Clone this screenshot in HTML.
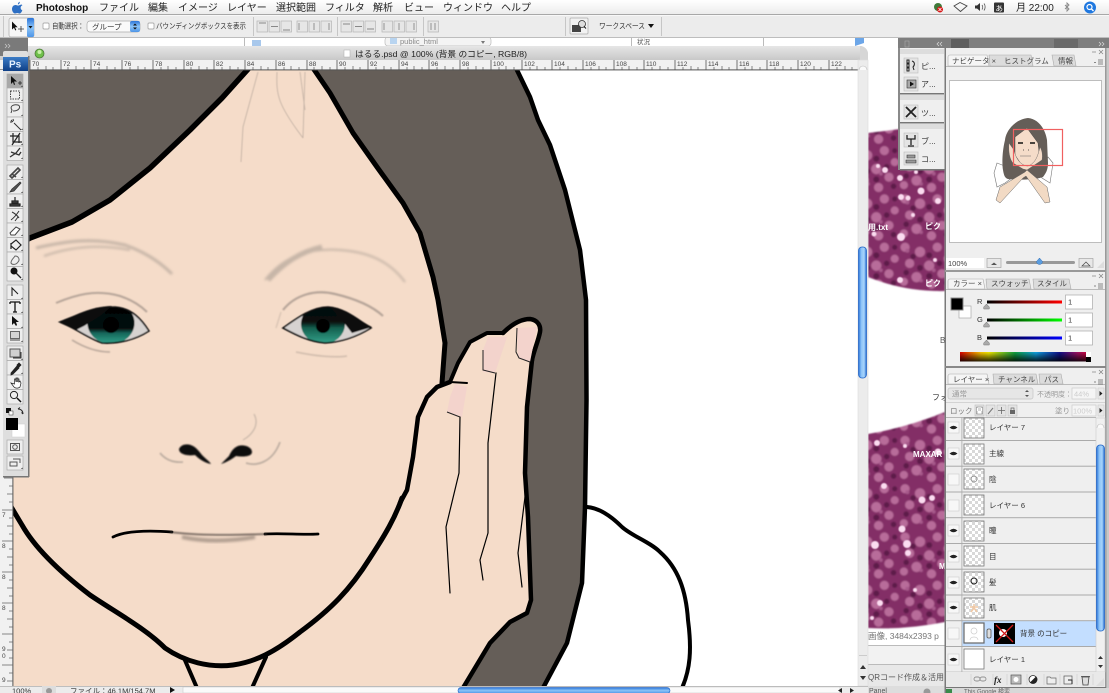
<!DOCTYPE html>
<html><head><meta charset="utf-8"><title>Photoshop</title>
<style>
html,body{margin:0;padding:0;background:#fff;width:1109px;height:693px;overflow:hidden}
svg{display:block}
#root{filter:blur(.3px)}
text{font-family:"Liberation Sans","Noto Sans CJK JP",sans-serif;fill:#333}
.m{font-size:10px;fill:#222}
.o{font-size:7.5px;fill:#333}
.t{font-size:7.5px;fill:#444}
.r{font-size:6.5px;fill:#444}
.l{font-size:7.5px;fill:#333}
.w{font-size:8px;fill:#fff;font-weight:bold}
</style></head><body>
<svg id="root" width="1109" height="693" viewBox="0 0 1109 693" xmlns="http://www.w3.org/2000/svg">
<defs>
<linearGradient id="menu" x1="0" y1="0" x2="0" y2="1"><stop offset="0" stop-color="#fff"/><stop offset="1" stop-color="#ececec"/></linearGradient>
<linearGradient id="title" x1="0" y1="0" x2="0" y2="1"><stop offset="0" stop-color="#e6e6e6"/><stop offset="1" stop-color="#c8c8c8"/></linearGradient>
<linearGradient id="blue" x1="0" y1="0" x2="1" y2="0"><stop offset="0" stop-color="#2a74d8"/><stop offset=".35" stop-color="#8cc4f8"/><stop offset=".7" stop-color="#a8d4fb"/><stop offset="1" stop-color="#1f6ad0"/></linearGradient>
<linearGradient id="blueh" x1="0" y1="0" x2="0" y2="1"><stop offset="0" stop-color="#2a74d8"/><stop offset=".5" stop-color="#8cc4f8"/><stop offset="1" stop-color="#4d94e6"/></linearGradient>
<linearGradient id="ps" x1="0" y1="0" x2="0" y2="1"><stop offset="0" stop-color="#3c7cc6"/><stop offset="1" stop-color="#0f3f86"/></linearGradient>
<linearGradient id="sr" x1="0" y1="0" x2="1" y2="0"><stop offset="0" stop-color="#000"/><stop offset="1" stop-color="#f00"/></linearGradient>
<linearGradient id="sg" x1="0" y1="0" x2="1" y2="0"><stop offset="0" stop-color="#000"/><stop offset="1" stop-color="#0f0"/></linearGradient>
<linearGradient id="sb" x1="0" y1="0" x2="1" y2="0"><stop offset="0" stop-color="#000"/><stop offset="1" stop-color="#00f"/></linearGradient>
<linearGradient id="hue" x1="0" y1="0" x2="1" y2="0"><stop offset="0" stop-color="#d00"/><stop offset=".16" stop-color="#f5c400"/><stop offset=".22" stop-color="#f0e800"/><stop offset=".42" stop-color="#10a040"/><stop offset=".58" stop-color="#10a0e0"/><stop offset=".76" stop-color="#10108a"/><stop offset=".9" stop-color="#a01060"/><stop offset="1" stop-color="#e00030"/></linearGradient>
<linearGradient id="dark" x1="0" y1="0" x2="0" y2="1"><stop offset="0" stop-color="#000" stop-opacity="0"/><stop offset="1" stop-color="#000" stop-opacity=".85"/></linearGradient>
<linearGradient id="irisL" x1="0" y1="0" x2="0" y2="1"><stop offset="0" stop-color="#040404"/><stop offset=".62" stop-color="#060a0a"/><stop offset=".74" stop-color="#15665a"/><stop offset="1" stop-color="#35a58c"/></linearGradient>
<linearGradient id="irisR" x1="0" y1="0" x2="0" y2="1"><stop offset="0" stop-color="#040404"/><stop offset=".45" stop-color="#081210"/><stop offset=".6" stop-color="#14604f"/><stop offset="1" stop-color="#36a48c"/></linearGradient>
<pattern id="chk" width="6" height="6" patternUnits="userSpaceOnUse"><rect width="6" height="6" fill="#fff"/><rect width="3" height="3" fill="#d8d8d8"/><rect x="3" y="3" width="3" height="3" fill="#d8d8d8"/></pattern>
<pattern id="gl" width="46" height="42" patternUnits="userSpaceOnUse" patternTransform="scale(1.15)">
<rect width="46" height="42" fill="#832f66"/>
<g fill="#b86c9a"><circle cx="5" cy="5" r="4"/><circle cx="18" cy="9" r="4.500"/><circle cx="33" cy="5" r="4"/><circle cx="42" cy="15" r="3.500"/><circle cx="9" cy="19" r="4"/><circle cx="26" cy="21" r="4.500"/><circle cx="37" cy="28" r="4"/><circle cx="15" cy="31" r="4.500"/><circle cx="4" cy="35" r="3.500"/><circle cx="28" cy="37" r="4"/></g>
<g fill="#5d1a4a"><circle cx="12" cy="13" r="2.400"/><circle cx="26" cy="12" r="2.600"/><circle cx="35" cy="19" r="2.400"/><circle cx="18" cy="23" r="2.600"/><circle cx="6" cy="27" r="2.400"/><circle cx="26" cy="30" r="2.600"/><circle cx="41" cy="36" r="2.400"/><circle cx="42" cy="5" r="2.200"/></g>
<g fill="#a85a8c"><circle cx="30" cy="25" r="1.600"/><circle cx="7" cy="8" r="1.700"/><circle cx="19" cy="34" r="1.500"/></g>
</pattern>
<filter id="b1" x="-20%" y="-50%" width="140%" height="200%"><feGaussianBlur stdDeviation=".7"/></filter>
<filter id="b2" x="-20%" y="-100%" width="140%" height="300%"><feGaussianBlur stdDeviation="1.300"/></filter>
<filter id="b3" x="-10%" y="-10%" width="120%" height="120%"><feGaussianBlur stdDeviation=".4"/></filter>
<filter id="bg"><feGaussianBlur stdDeviation=".7"/></filter>
</defs>

<!-- desktop base -->
<rect width="1109" height="693" fill="#fff"/>

<!-- glitter behind -->
<rect x="868" y="40" width="77" height="653" fill="#fff"/>
<g filter="url(#bg)">
<path d="M868 133L900 129H945V291Q905 292 868 277Z" fill="url(#gl)"/>
<path d="M868 434Q905 428 945 412V622Q905 630 868 628Z" fill="url(#gl)"/>
</g>
<g fill="#fbdcf0" filter="url(#b3)">
<circle cx="885" cy="170" r="3"/><circle cx="900" cy="178" r="3"/><circle cx="921" cy="191" r="3.500"/><circle cx="901" cy="197" r="3"/><circle cx="908" cy="198" r="2.500"/><circle cx="938" cy="201" r="3"/><circle cx="901" cy="237" r="4"/><circle cx="874" cy="234" r="2.500"/><circle cx="900" cy="280" r="3"/><circle cx="878" cy="166" r="2"/><circle cx="916" cy="172" r="2"/><circle cx="913" cy="215" r="2"/><circle cx="935" cy="260" r="2"/>
<circle cx="877" cy="443" r="3"/><circle cx="905" cy="446" r="2"/><circle cx="938" cy="452" r="3.500"/><circle cx="884" cy="486" r="3"/><circle cx="922" cy="500" r="3.500"/><circle cx="932" cy="498" r="3"/><circle cx="902" cy="529" r="3.500"/><circle cx="875" cy="545" r="4"/><circle cx="907" cy="544" r="4"/><circle cx="908" cy="553" r="3"/><circle cx="880" cy="603" r="3"/><circle cx="915" cy="590" r="2"/><circle cx="872" cy="618" r="2"/>
</g>
<text class="w" x="868" y="230">用.txt</text>
<text class="w" x="925" y="229">ピク</text>
<text class="w" x="925" y="286">ピク</text>
<text x="940" y="343" font-size="8" style="fill:#555">B</text>
<text x="932" y="400" font-size="8" style="fill:#333">フォ</text>
<text class="w" x="913" y="457">MAXAR</text>
<text class="w" x="939" y="569">M</text>
<text x="868" y="639" font-size="8.500" style="fill:#777">画像, 3484x2393 p</text>
<rect x="868" y="645" width="77" height="1" fill="#bbb"/>
<rect x="868" y="646" width="77" height="18" fill="#f2f2f2"/>
<rect x="868" y="664" width="77" height="1" fill="#bbb"/>
<rect x="868" y="665" width="77" height="21" fill="#e8e8e8"/>
<text x="868" y="680" font-size="8" style="fill:#555">QRコード作成＆活用の</text>
<rect x="868" y="686" width="77" height="7" fill="#ddd"/>
<text x="869" y="693" font-size="7" style="fill:#555">Panel</text>
<circle cx="927" cy="692" r="3.500" fill="#999"/>

<!-- strip behind doc window -->
<rect x="28" y="38" width="830" height="9" fill="#fff"/>
<rect x="244" y="38" width="1" height="9" fill="#bbb"/>
<rect x="252" y="40" width="9" height="7" fill="#a8c8ec"/>
<rect x="385" y="37" width="106" height="9" rx="3" fill="#f4f4f4" stroke="#bbb" stroke-width=".7"/>
<rect x="390" y="38" width="7" height="6" fill="#b8d4f0"/>
<text x="400" y="44" font-size="7.500" style="fill:#888">public_html</text>
<path d="M481 41l2 3 2-3z" fill="#777"/>
<rect x="631" y="38" width="1" height="9" fill="#bbb"/>
<text x="637" y="44" font-size="6.500" style="fill:#555">状況</text>
<rect x="763" y="38" width="1" height="9" fill="#bbb"/>
<path d="M855 38h9v5l-9 3z" fill="#6ca6e8"/>

<!-- doc window -->
<path d="M13 60V46H860a8 8 0 0 1 8 8V693H13Z" fill="#ddd"/>
<rect x="0" y="46" width="862" height="14" fill="url(#title)"/>
<path d="M860 46a8 8 0 0 1 8 8v6h-8z" fill="#d6d6d6"/>
<circle cx="39.500" cy="53.500" r="4.500" fill="#6fc04a" stroke="#4f7a3c" stroke-width=".8"/>
<circle cx="39.500" cy="52" r="2" fill="#c8f0a8"/>
<rect x="344" y="50" width="6" height="7" fill="#fff" stroke="#aaa" stroke-width=".5"/>
<text x="355" y="57" font-size="8.700" style="fill:#222">はるる.psd @ 100% (背景 のコピー, RGB/8)</text>

<!-- canvas art -->
<svg x="13" y="70" width="845" height="616" viewBox="13 70 845 616">
<rect x="13" y="70" width="845" height="616" fill="#f5dcc9"/>
<!-- left hair -->
<path d="M0 70H248L222 98 190 130 150 168 110 200 72 222 30 238 0 254Z" fill="#655e58"/>
<!-- right hair -->
<path d="M313 70L330 93 353 133 377 167 403 203 420 233 433 277 438 300 445 343 442 383 500 450 500 620 430 686H543L567 643 582 583 585 507 586.500 400 586 300 580 250 565 190 550 145 538 120 530 97 517 70Z" fill="#655e58"/>
<!-- white -->
<path d="M517 70L530 97 538 120 550 145 565 190 580 250 586 300 586.500 400 585 507 582 583 567 643 543 686H858V70Z" fill="#fff"/>
<!-- outlines -->
<g fill="none" stroke="#000" stroke-linecap="round" stroke-linejoin="round">
<path d="M249 68L222 98 190 130 150 168 110 200 72 222 30 238 10 250" stroke-width="5.500"/>
<path d="M313 68L330 93 353 133 377 167 403 203 420 233 433 277 438 300 445 343 442 383" stroke-width="5"/>
<path d="M516 68L530 97 538 120 550 145 565 190 580 250 586 300 586.500 400 585 507 582 583 567 643 543 688" stroke-width="4.500"/>
<path d="M587 507C600 508 612 517 622 527 632 536 650 542 660 552 678 568 686 590 688 620 692 650 690 670 682 688" stroke-width="4"/>
<path d="M400 503L407 490 413 457 418 417 427 397 437 387 450 382 458 363 470 342 487 333 503 333C510 326 520 319 530 319 538 320 541 326 540 332 538 342 534 350 532 360L527 407 525 473 528 517 531 600 527 613 510 622 490 643 463 688H380Z" fill="#f5dcc9" stroke="none"/>
<path d="M400 503L407 490 413 457 418 417 427 397 437 387 450 382" stroke-width="4.500"/>
<path d="M450 382L467 383" stroke-width="2"/>
<path d="M450 382L458 363 470 342 487 333 503 333" stroke-width="4"/>
<path d="M503 333C510 326 520 319 530 319 538 320 541 326 540 332 538 342 534 350 532 360" stroke-width="4.500"/>
<path d="M532 360L527 407 525 473 528 517 531 600 527 613 510 622 490 643 463 688" stroke-width="4.500"/>
<path d="M10 505L22 525C35 548 60 572 90 595 115 612 145 628 165 648 185 662 210 668 233 665 255 662 275 652 300 632 330 610 350 590 370 558 385 535 395 518 402 498" stroke-width="5"/>
<path d="M184 658L197 688M266 657L252 688" stroke-width="4"/>
<path d="M113 537C125 531 145 530 172 532" stroke-width="2.800"/>
<path d="M265 534C285 533 300 535 318 534" stroke-width="2.800"/>
<g stroke-width="1.200"><path d="M460 417L459 473 446 527 450 593"/><path d="M496 373L488 443 488 533 480 560 483 580"/><path d="M525 497L518 553 522 587"/></g>
</g>
<!-- nails -->
<g fill="#f3d3cc"><path d="M455 384L467 387 462 417 447 412 450 397Z"/><path d="M488 337L507 337 495 373 483 372 483 350Z"/><path d="M517 328L537 327 530 362 518 358Z"/></g>
<g fill="none" stroke="#222" stroke-width="1"><path d="M447 412L460 417M483 350L483 370 495 373M517 328L516 352 519 358 530 362"/></g>
<!-- mouth center -->
<path d="M170 532C200 536 235 535 267 534" fill="none" stroke="#3a332e" stroke-width="2" opacity=".6" filter="url(#b1)"/>
<path d="M182 537Q215 544 255 537" fill="none" stroke="#6d6058" stroke-width="4" opacity=".5" filter="url(#b2)"/>
<!-- hair strands -->
<g fill="none" stroke="#a79a90" stroke-width=".9" opacity=".6" filter="url(#b3)">
<path d="M258 72L243 127 241 162"/><path d="M277 72C276 95 278 105 303 138"/><path d="M305 72L303 138"/><path d="M300 72L305 110"/>
</g>
<!-- brows -->
<g fill="none" stroke="#a89c92" opacity=".6" filter="url(#b2)">
<path d="M36 248C70 240 95 238 125 245 145 252 160 262 172 274" stroke-width="3"/><path d="M44 256C75 245 105 245 130 250" stroke-width="2"/>
<path d="M265 280C285 255 310 248 340 250 370 252 390 262 405 282" stroke-width="2"/><path d="M268 280C285 262 300 252 322 247" stroke-width="5"/>
</g>
<!-- lids -->
<g fill="none" filter="url(#b1)" stroke="#9b8d84" opacity=".7">
<path d="M56 303C75 295 95 289 120 296 135 301 143 308 147 312" stroke-width="2"/>
<path d="M72 340C85 348 98 352 110 352" stroke-width="1.500"/>
<path d="M283 310C295 295 315 289 335 294 352 298 370 304 383 316" stroke-width="2.200"/>
<path d="M296 352C315 356 335 358 347 356" stroke-width="1.500" opacity=".6"/>
<path d="M276 328L281 312" stroke-width="1" opacity=".6"/>
</g>
<!-- eyes -->
<clipPath id="le"><path d="M60 322C75 316 95 307 115 307 132 308 142 320 149 331 135 340 118 344 102 343 88 338 75 328 60 322Z"/></clipPath>
<clipPath id="re"><path d="M283 328C297 318 312 307 328 307 345 308 358 320 371 328 358 336 342 342 325 343 310 342 296 335 283 328Z"/></clipPath>
<g filter="url(#b3)">
<path d="M60 322C75 316 95 307 115 307 132 308 142 320 149 331 135 340 118 344 102 343 88 338 75 328 60 322Z" fill="#d6d2d0"/>
<g clip-path="url(#le)"><ellipse cx="111" cy="323" rx="23.500" ry="21" fill="url(#irisL)"/><circle cx="111" cy="325" r="8" fill="#000"/></g>
<path d="M60 322C75 316 95 307 115 307 132 308 142 320 149 331 135 340 118 344 102 343 88 338 75 328 60 322Z" fill="none" stroke="#111" stroke-width="1.600"/>
<path d="M60 323C72 316 92 306 112 306L100 316 84 326 76 330Z" fill="#080808"/>
<path d="M283 328C297 318 312 307 328 307 345 308 358 320 371 328 358 336 342 342 325 343 310 342 296 335 283 328Z" fill="#d6d2d0"/>
<g clip-path="url(#re)"><ellipse cx="323" cy="324" rx="22" ry="20" fill="url(#irisR)"/><circle cx="323" cy="326" r="7" fill="#000"/></g>
<path d="M283 328C297 318 312 307 328 307 345 308 358 320 371 328 358 336 342 342 325 343 310 342 296 335 283 328Z" fill="none" stroke="#111" stroke-width="1.600"/>
<path d="M330 307C345 308 358 320 372 327L352 333 342 320Z" fill="#080808"/>
</g>
<!-- nose -->
<g filter="url(#b1)">
<path d="M179 449C181 444 188 443 193 446 198 449 200 453 203 456 206 459 210 462 211 464 205 463 199 459 195 455 189 456 179 455 179 449Z" fill="#111"/>
<path d="M252 452C252 447 244 444 238 446 233 448 231 452 229 456 226 459 223 462 221 464 227 462 232 459 236 456 242 457 252 457 252 452Z" fill="#111"/>
</g>
<g fill="none" stroke="#a89c92" filter="url(#b1)" opacity=".7">
<path d="M160 453C165 459 172 463 183 462" stroke-width="1.800"/>
<path d="M246 463C255 466 272 464 280 442" stroke-width="1.800"/>
<path d="M243 440C252 435 260 425 254 414" stroke-width="1"/>
</g>
</svg>

<!-- rulers -->
<rect x="0" y="60" width="858" height="10" fill="#f1f1f1"/>
<rect x="0" y="69.400" width="858" height="1" fill="#555"/>
<path d="M30 60v10M61 60v10M91 60v10M122 60v10M153 60v10M184 60v10M214 60v10M245 60v10M276 60v10M307 60v10M337 60v10M368 60v10M399 60v10M429 60v10M460 60v10M491 60v10M522 60v10M552 60v10M583 60v10M614 60v10M644 60v10M675 60v10M706 60v10M737 60v10M767 60v10M798 60v10M829 60v10" stroke="#555" stroke-width=".8"/>
<path d="M38 67v3M46 66v4M53 67v3M68 67v3M76 66v4M84 67v3M99 67v3M107 66v4M115 67v3M130 67v3M138 66v4M145 67v3M161 67v3M168 66v4M176 67v3M191 67v3M199 66v4M207 67v3M222 67v3M230 66v4M238 67v3M253 67v3M261 66v4M268 67v3M284 67v3M291 66v4M299 67v3M314 67v3M322 66v4M330 67v3M345 67v3M353 66v4M360 67v3M376 67v3M384 66v4M391 67v3M407 67v3M414 66v4M422 67v3M437 67v3M445 66v4M453 67v3M468 67v3M476 66v4M483 67v3M499 67v3M506 66v4M514 67v3M530 67v3M537 66v4M545 67v3M560 67v3M568 66v4M576 67v3M591 67v3M599 66v4M606 67v3M622 67v3M629 66v4M637 67v3M652 67v3M660 66v4M668 67v3M683 67v3M691 66v4M698 67v3M714 67v3M722 66v4M729 67v3M745 67v3M752 66v4M760 67v3M775 67v3M783 66v4M791 67v3M806 67v3M814 66v4M821 67v3M837 67v3M845 66v4M852 67v3" stroke="#555" stroke-width=".7"/>
<text class="r" x="32" y="66">70</text><text class="r" x="63" y="66">72</text><text class="r" x="93" y="66">74</text><text class="r" x="124" y="66">76</text><text class="r" x="155" y="66">78</text><text class="r" x="186" y="66">80</text><text class="r" x="216" y="66">82</text><text class="r" x="247" y="66">84</text><text class="r" x="278" y="66">86</text><text class="r" x="309" y="66">88</text><text class="r" x="339" y="66">90</text><text class="r" x="370" y="66">92</text><text class="r" x="401" y="66">94</text><text class="r" x="431" y="66">96</text><text class="r" x="462" y="66">98</text><text class="r" x="493" y="66">100</text><text class="r" x="524" y="66">102</text><text class="r" x="554" y="66">104</text><text class="r" x="585" y="66">106</text><text class="r" x="616" y="66">108</text><text class="r" x="646" y="66">110</text><text class="r" x="677" y="66">112</text><text class="r" x="708" y="66">114</text><text class="r" x="739" y="66">116</text><text class="r" x="769" y="66">118</text><text class="r" x="800" y="66">120</text><text class="r" x="831" y="66">122</text>
<rect x="0" y="70" width="13" height="616" fill="#f1f1f1"/>
<rect x="12.400" y="70" width="1" height="616" fill="#555"/>
<path d="M4 478h9M9 486h4M7 494h6M9 502h4M2 510h11M9 518h4M7 526h6M9 534h4M2 541h11M9 549h4M7 557h6M9 565h4M2 572h11M9 580h4M7 588h6M9 596h4M2 603h11M9 611h4M7 619h6M9 627h4M2 634h11M9 642h4M7 650h6M9 658h4M2 665h11M9 673h4M7 681h6" stroke="#666" stroke-width=".7"/>
<text class="r" x="2" y="517">7</text><text class="r" x="2" y="548">8</text><text class="r" x="2" y="579">8</text><text class="r" x="2" y="610">8</text><text class="r" x="2" y="651">9</text><text class="r" x="2" y="658">0</text><text class="r" x="2" y="682">9</text>

<!-- vertical scrollbar -->
<rect x="858" y="60" width="10" height="626" fill="#ececec"/>
<rect x="858" y="60" width="10" height="626" fill="none" stroke="#ddd" stroke-width=".6"/>
<path d="M859 70a4 4 0 0 1 8 0" fill="#fafafa" stroke="#bbb" stroke-width=".6"/>
<rect x="858.500" y="247" width="8" height="131" rx="3.500" fill="url(#blue)" stroke="#1b5fc4" stroke-width=".7"/>
<rect x="859" y="655" width="8" height="1" fill="#ccc"/>
<path d="M860 669l3-4 3 4zM860 676l3 4 3-4z" fill="#333"/>

<!-- status bar -->
<rect x="0" y="686" width="868" height="7" fill="#ececec"/>
<rect x="0" y="686" width="868" height=".7" fill="#aaa"/>
<text x="12" y="693.500" font-size="7.500" style="fill:#333">100%</text>
<rect x="42" y="686" width="14" height="7" fill="#ddd"/>
<circle cx="49" cy="691" r="3" fill="#999"/>
<text x="70" y="693.500" font-size="7.500" style="fill:#333">ファイル：46.1M/154.7M</text>
<path d="M170 687l5 3-5 3z" fill="#111"/>
<rect x="183" y="687" width="657" height="6" fill="#fafafa" stroke="#ccc" stroke-width=".6"/>
<rect x="458" y="687.500" width="212" height="6" rx="3" fill="url(#blueh)" stroke="#1b5fc4" stroke-width=".6"/>
<path d="M842 688l-4 2.500 4 2.500zM850 688l4 2.500-4 2.500z" fill="#222"/>

<!-- toolbox -->
<rect x="0" y="38" width="28" height="18" fill="#7a7a7a"/>
<path d="M5 44l2 2-2 2M8 44l2 2-2 2" stroke="#ccc" stroke-width=".7" fill="none"/>
<rect x="3" y="51" width="25" height="426" rx="2" fill="#dedede"/>
<rect x="28" y="56" width="1.500" height="421" fill="#777"/>
<rect x="3" y="476" width="26" height="1.500" fill="#777"/>
<rect x="3" y="57" width="25" height="14" fill="url(#ps)"/>
<text x="9" y="67.500" font-size="10" style="fill:#e8f2ff;font-weight:bold">Ps</text>
<g fill="#eee" stroke="#aaa" stroke-width=".7">
<rect x="7" y="74" width="16" height="14" fill="#a8a8a8"/><rect x="7" y="88" width="16" height="14.500"/><rect x="7" y="102.500" width="16" height="14.500"/><rect x="7" y="117" width="16" height="14.500"/><rect x="7" y="131.500" width="16" height="14.500"/><rect x="7" y="146" width="16" height="14.500"/>
<rect x="7" y="165" width="16" height="14.500"/><rect x="7" y="179.500" width="16" height="14.500"/><rect x="7" y="194" width="16" height="14.500"/><rect x="7" y="208.500" width="16" height="14.500"/><rect x="7" y="223" width="16" height="14.500"/><rect x="7" y="237.500" width="16" height="14.500"/><rect x="7" y="252" width="16" height="14.500"/><rect x="7" y="266.500" width="16" height="14.500"/>
<rect x="7" y="285" width="16" height="14.500"/><rect x="7" y="299.500" width="16" height="14.500"/><rect x="7" y="314" width="16" height="14.500"/><rect x="7" y="328.500" width="16" height="14.500"/>
<rect x="7" y="346" width="16" height="14.500"/><rect x="7" y="360.500" width="16" height="14.500"/><rect x="7" y="375" width="16" height="14.500"/><rect x="7" y="389.500" width="16" height="14.500"/>
<rect x="7" y="440" width="16" height="14"/><rect x="7" y="456" width="16" height="14"/>
</g>
<g fill="none" stroke="#222" stroke-width="1">
<path d="M11 76v8l2-2 1 3 1-.5-1-3h3Z" fill="#111" stroke="none"/><path d="M18 83h4M20 81v4" stroke-width=".8"/>
<rect x="10.500" y="91" width="9" height="8" stroke-dasharray="1.500 1" stroke="#444"/>
<path d="M11 113l1-3c-3-4 2-6 6-5 3 1 2 6-5 6" stroke="#444"/>
<path d="M11 120l2 2M13 119l.5 2M10 122h2M14 123l7 7" stroke="#333"/>
<path d="M10 136h9v7M13 133v9h9M12 145l8-12" stroke="#222" stroke-width="1.200"/>
<path d="M10 157l6-4 4-5M11 152l8 3 2-3" stroke="#333" stroke-width="1.300"/>
<path d="M10 176l8-8 2 2-8 8zM12 174l4 3" stroke="#444" stroke-width="1.600"/>
<path d="M10 192l2-3 8-7 1 1-7 8z" fill="#555" stroke="#333" stroke-width=".8"/>
<path d="M15 197v4M12 201h6v2h-6zM10 204h10v2h-10z" fill="#555" stroke="#222" stroke-width="1.200"/>
<path d="M11 220c4-3 6-6 8-9M12 212c2 1 5 3 7 6M15 221l3-4" stroke="#333"/>
<path d="M10 233l6-6 4 2-5 6h-4z" fill="#fff" stroke="#444"/>
<path d="M11 244l5-4 5 5-5 5-5-4zM11 243v6" stroke="#222" stroke-width="1.200"/>
<path d="M15 256c4 0 5 4 3 6-2 3-6 3-7 1 0-3 2-4 4-7z" stroke="#666"/>
<circle cx="14" cy="271" r="3.500" fill="#111" stroke="none"/><path d="M16 273l5 5" stroke="#222" stroke-width="1.300"/>
<path d="M12 296v-8l6 6" stroke="#222" stroke-width="1.100"/>
<path d="M10 302h10M15 302v10M13 312h4M10 302v2M20 302v2" stroke="#111" stroke-width="1.300"/>
<path d="M12 316v9l2-2 2 3 1-1-1-3h3Z" fill="#111" stroke="none"/>
<rect x="10.500" y="331.500" width="9" height="7" fill="#d4d4d4" stroke="#666"/><path d="M10 340h10" stroke="#444"/>
<rect x="10" y="349" width="10" height="8" fill="#d0d0d0" stroke="#555"/><path d="M13 358h8v-6" stroke="#333"/>
<path d="M11 373l6-7 2 2-6 6-2 1zM17 365l2-2 2 2-2 2z" fill="#222" stroke="#222" stroke-width=".8"/>
<path d="M11 383l3 4c2 2 5 1 6 0l1-4-1-2-1 1v-3h-1v3-4h-1v4-4h-1v4l-.5-3h-1v5z" fill="#fff" stroke="#222" stroke-width=".7"/>
<circle cx="14" cy="395" r="3.600" stroke="#222" fill="#eee"/><path d="M17 398l4 4" stroke="#111" stroke-width="1.500"/>
<rect x="10.500" y="443.500" width="9" height="7" stroke="#555"/><circle cx="15" cy="447" r="2.300" stroke="#555"/>
<path d="M10 462h7v4h-7zM13 459h7v4" stroke="#555"/>
</g>
<g fill="#222"><path d="M21 87l1.500-1.500V87zM21 101l1.500-1.500V101zM21 116l1.500-1.500V116zM21 130l1.500-1.500V130zM21 145l1.500-1.500V145zM21 159l1.500-1.500V159zM21 178l1.500-1.500V178zM21 193l1.500-1.500V193zM21 207l1.500-1.500V207zM21 222l1.500-1.500V222zM21 236l1.500-1.500V236zM21 251l1.500-1.500V251zM21 265l1.500-1.500V265zM21 280l1.500-1.500V280zM21 299l1.500-1.500V299zM21 313l1.500-1.500V313zM21 328l1.500-1.500V328zM21 342l1.500-1.500V342zM21 360l1.500-1.500V360zM21 374l1.500-1.500V374zM21 469l1.500-1.500V469z"/></g>
<rect x="6" y="408" width="5" height="5" fill="#111"/><rect x="9" y="411" width="4" height="4" fill="#fff" stroke="#333" stroke-width=".5"/>
<path d="M18 409c3 0 5 2 5 5M18 409l2-1.500M23 414l-1.500-1.500" fill="none" stroke="#222" stroke-width=".9"/>
<rect x="12" y="424" width="13" height="13" fill="#fff" stroke="#ccc" stroke-width=".5"/>
<rect x="6" y="418" width="12" height="12" fill="#000"/>

<!-- menu bar -->
<rect x="0" y="0" width="1109" height="14" fill="url(#menu)"/>
<rect x="0" y="14" width="1109" height="1" fill="#a8a8a8"/>
<path d="M18 4.500c1-.1 2-1.500 1.800-2.700-1 .2-2.100 1.400-1.800 2.700zM20.600 5c-1.200 0-1.800.6-2.500.6S16.600 5 15.500 5c-2 0-3.500 1.800-3.500 4 0 2.400 1.700 4.500 3 4.500.8 0 1.300-.5 2.300-.5s1.300.5 2.200.5c1.300 0 2.400-2 2.800-3.300-2.200-.9-2.300-4 .1-5-.5-.5-1-.7-1.800-.7z" fill="#2d6fc4"/>
<text x="36" y="11" font-size="10" style="fill:#111;font-weight:bold">Photoshop</text>
<text class="m" x="99" y="11">ファイル</text>
<text class="m" x="148" y="11">編集</text>
<text class="m" x="178" y="11">イメージ</text>
<text class="m" x="227" y="11">レイヤー</text>
<text class="m" x="276" y="11">選択範囲</text>
<text class="m" x="325" y="11">フィルタ</text>
<text class="m" x="373" y="11">解析</text>
<text class="m" x="404" y="11">ビュー</text>
<text class="m" x="443" y="11">ウィンドウ</text>
<text class="m" x="501" y="11">ヘルプ</text>
<circle cx="938" cy="7" r="4" fill="#3f7a3a"/><circle cx="940" cy="9.500" r="3" fill="#d81818"/><path d="M938.500 8l3 3M941.500 8l-3 3" stroke="#fff" stroke-width=".8"/>
<path d="M954 6l6-3.500 7 3.500-6.500 5.500z" fill="none" stroke="#444" stroke-width=".9"/>
<path d="M975 5.500h2l3-2.500v8l-3-2.500h-2z" fill="#333"/><path d="M982 5c1 1.500 1 3 0 4.500M984 3.500c1.500 2 1.500 5 0 7" fill="none" stroke="#555" stroke-width=".8"/>
<rect x="994" y="2.500" width="10" height="10" rx="1" fill="#333"/><text x="995.500" y="11" font-size="7.500" style="fill:#fff">あ</text>
<text x="1016" y="11" font-size="10" style="fill:#222">月 22:00</text>
<path d="M1065 5l4 4-2 2V3l2 2-4 4" fill="none" stroke="#888" stroke-width=".9"/>
<circle cx="1090" cy="7.500" r="6" fill="#1f78e0"/><circle cx="1089.500" cy="7" r="2.500" fill="none" stroke="#fff" stroke-width="1.200"/><path d="M1091.500 9l2 2" stroke="#fff" stroke-width="1.300"/>

<!-- options bar -->
<rect x="0" y="15" width="1109" height="23" fill="#ececec"/>
<rect x="0" y="37" width="1109" height="1" fill="#bdbdbd"/>
<rect x="0" y="15" width="1109" height=".8" fill="#fafafa"/>
<rect x="3" y="16" width="1" height="21" fill="#c8c8c8"/>
<rect x="9" y="18" width="25" height="19" rx="2" fill="#f6f6f6" stroke="#aaa" stroke-width=".7"/>
<rect x="27" y="18" width="7" height="19" rx="1.500" fill="url(#blueh)"/>
<path d="M28.500 26l2 2.500 2-2.500z" fill="#111"/>
<path d="M12 21.500v8l2-1.800 1.300 2.800 1-.5-1.300-2.700h2.700z" fill="#111"/><path d="M18 29h6M21 26v6" stroke="#333" stroke-width=".8"/>
<rect x="43" y="23" width="6" height="6" rx="1" fill="#fff" stroke="#999" stroke-width=".7"/>
<text class="o" x="52" y="28.500" textLength="32" lengthAdjust="spacingAndGlyphs">自動選択：</text>
<rect x="87" y="21" width="53" height="11" rx="3" fill="#fafafa" stroke="#aaa" stroke-width=".7"/>
<rect x="130" y="21" width="10" height="11" rx="2" fill="url(#blueh)"/>
<path d="M133 25.500l2-2 2 2zM133 27.500l2 2 2-2z" fill="#111"/>
<text class="o" x="92" y="29.500">グループ</text>
<rect x="148" y="23" width="6" height="6" rx="1" fill="#fff" stroke="#999" stroke-width=".7"/>
<text class="o" x="156" y="28.500" textLength="90" lengthAdjust="spacingAndGlyphs">バウンディングボックスを表示</text>
<rect x="253" y="17" width="1" height="19" fill="#c6c6c6"/>
<g fill="#e6e6e6" stroke="#b4b4b4" stroke-width=".7">
<rect x="257" y="21" width="10.500" height="11"/><rect x="269" y="21" width="10.500" height="11"/><rect x="281" y="21" width="10.500" height="11"/><rect x="297" y="21" width="10.500" height="11"/><rect x="309" y="21" width="10.500" height="11"/><rect x="321" y="21" width="10.500" height="11"/>
<rect x="341" y="21" width="10.500" height="11"/><rect x="353" y="21" width="10.500" height="11"/><rect x="365" y="21" width="10.500" height="11"/><rect x="382" y="21" width="10.500" height="11"/><rect x="394" y="21" width="10.500" height="11"/><rect x="406" y="21" width="10.500" height="11"/><rect x="428" y="21" width="10.500" height="11"/>
</g>
<path d="M259 23h7M271 26.500h7M283 30h7M299 23v7M314 23v7M329 23v7M343 24h7M355 26.500h7M367 29h7M384 23v7M399 23v7M414 23v7M431 23v7M435 23v7" stroke="#888" stroke-width=".9"/>
<rect x="337" y="17" width="1" height="19" fill="#c6c6c6"/>
<rect x="423" y="17" width="1" height="19" fill="#c6c6c6"/>
<rect x="565" y="17" width="1" height="19" fill="#c6c6c6"/>
<rect x="570" y="18" width="18" height="16" rx="1" fill="#f2f2f2" stroke="#aaa" stroke-width=".7"/>
<rect x="572" y="25" width="9" height="7" fill="#444"/><circle cx="582" cy="24" r="3.500" fill="#ddd" stroke="#333" stroke-width=".8"/><path d="M584 26.500l2 2" stroke="#111"/>
<text class="o" x="599" y="28.500" textLength="46" lengthAdjust="spacingAndGlyphs">ワークスペース</text>
<path d="M648 24h6l-3 4z" fill="#111"/>
<rect x="661" y="17" width="1" height="19" fill="#c6c6c6"/>

<!-- panel well -->
<rect x="898" y="38" width="211" height="10" fill="#7e7e7e"/>
<rect x="951" y="39" width="18" height="9" fill="#5f5f5f"/>
<rect x="1054" y="39" width="24" height="9" fill="#6a6a6a"/>
<path d="M939 42l-2 2 2 2M942 42l-2 2 2 2M1099 42l2 2-2 2M1102 42l2 2-2 2" fill="none" stroke="#ddd" stroke-width=".7"/>
<rect x="905" y="41" width="4" height="6" fill="none" stroke="#aaa" stroke-width=".6"/>

<!-- dock -->
<rect x="898" y="48" width="47" height="122" fill="#efefef"/>
<rect x="898" y="48" width="2" height="122" fill="#8a8a8a"/>
<rect x="900" y="49" width="44" height="5" fill="#ddd"/>
<rect x="900" y="93" width="44" height="1.500" fill="#777"/>
<rect x="900" y="95" width="44" height="5" fill="#ddd"/>
<rect x="900" y="122" width="44" height="1.500" fill="#777"/>
<rect x="900" y="124" width="44" height="5" fill="#ddd"/>
<rect x="900" y="169" width="45" height="1.500" fill="#777"/>
<g fill="#e4e4e4" stroke="#bbb" stroke-width=".6"><rect x="904" y="58" width="14" height="15"/><rect x="904" y="77" width="14" height="14"/><rect x="904" y="105" width="14" height="14"/><rect x="904" y="133" width="14" height="14"/><rect x="904" y="152" width="14" height="13"/></g>
<path d="M907 60h2v3h-2zM907 64h2v3h-2zM907 68h2v3h-2zM912 61c3 1 3 4 1 6l1 3" fill="none" stroke="#222" stroke-width="1"/>
<rect x="907" y="80" width="9" height="8" fill="#aaa" stroke="#333" stroke-width=".6"/><path d="M910 81.500l4 2.500-4 2.500z" fill="#111"/>
<path d="M906 107l10 10M916 107l-10 10" stroke="#222" stroke-width="1.800"/>
<path d="M907 135v4h8v-4M911 139v6M908 146h6" fill="none" stroke="#222" stroke-width="1.300"/>
<path d="M907 155h8v3h-8zM906 160h10v3h-10z" fill="#999" stroke="#333" stroke-width=".6"/>
<text x="921" y="69" font-size="8" style="fill:#333">ピ...</text><text x="921" y="87" font-size="8" style="fill:#333">ア...</text><text x="921" y="116" font-size="8" style="fill:#333">ツ...</text><text x="921" y="144" font-size="8" style="fill:#333">ブ...</text><text x="921" y="162" font-size="8" style="fill:#333">コ...</text>

<!-- right panel column background -->
<rect x="945" y="48" width="161" height="640" fill="#efefef"/>
<rect x="944.500" y="48" width="1.500" height="645" fill="#7a7a7a"/>
<rect x="1105" y="48" width="1.500" height="640" fill="#9a9a9a"/>
<rect x="1106.500" y="48" width="3" height="645" fill="#c8c8c8"/>

<!-- navigator -->
<path d="M1092 52h4M1099 50l4 4M1103 50l-4 4" stroke="#888" stroke-width=".8"/>
<rect x="946" y="66" width="159" height="1" fill="#bbb"/>
<path d="M948 66v-9a2 2 0 0 1 2-2h37l2 11z" fill="#f5f5f5" stroke="#aaa" stroke-width=".6"/>
<path d="M990 66l-1-11h42l2 11z" fill="#dcdcdc" stroke="#aaa" stroke-width=".6"/>
<path d="M1054 66l-2-11h22l2 11z" fill="#dcdcdc" stroke="#aaa" stroke-width=".6"/>
<text class="t" x="952" y="63.500">ナビゲータ ×</text>
<text class="t" x="1004" y="63.500">ヒストグラム</text>
<text class="t" x="1058" y="63.500">情報</text>
<path d="M1094 62.500h2M1098 60h5M1098 62h5M1098 64h5" stroke="#666" stroke-width=".7"/>
<rect x="949.500" y="80.500" width="152" height="162" fill="#fff" stroke="#bdbdbd" stroke-width="1"/>
<!-- thumbnail figure -->
<path d="M997 163L994 173 997 187 1005 183 1020 172ZM1048 157L1053 163 1050 183 1042 178 1035 168Z" fill="#fff" stroke="#777" stroke-width=".6"/>
<path d="M1028 118C1016 119 1006 130 1005 140 1002 152 1002 165 1003 170 1004 176 1005 178 1008 179 1014 180 1036 180 1043 177 1047 172 1048 168 1048 163L1047 140C1045 128 1038 119 1028 118Z" fill="#655e58"/>
<path d="M1015 137L1027 128 1038 143 1040 160 1030 167 1023 167 1015 155Z" fill="#f5dcc9" stroke="#333" stroke-width=".4"/>
<path d="M1009 143C1008 152 1010 160 1013 163L1023 169 1027 170 1030 168 1042 160C1043 155 1042 150 1040 147 1038 155 1036 163 1028 166 1022 166 1016 160 1014 150Z" fill="#f5dcc9" stroke="#555" stroke-width=".4"/>
<path d="M1025 172L1000 187 996 200 1000 203 1023 178 1026 176 1045 203 1050 202 1047 187 1027 170Z" fill="#f2dac4" stroke="#666" stroke-width=".5"/>
<path d="M1018 143h5M1030 143h5" stroke="#111" stroke-width="1.500"/><path d="M1020 156h11" stroke="#666" stroke-width=".5"/><path d="M1023 150h1M1028 150h1" stroke="#333" stroke-width=".7"/>
<rect x="1013.500" y="129.500" width="49" height="36" fill="none" stroke="#f06060" stroke-width="1.200"/>
<rect x="946" y="258" width="38" height="10" fill="#fff"/>
<text class="t" x="948" y="266">100%</text>
<rect x="987" y="258.500" width="14" height="9" fill="#e8e8e8" stroke="#999" stroke-width=".6"/><path d="M991 265l3-2.500 3 2.500z" fill="#555"/>
<rect x="1006" y="261" width="69" height="3" rx="1.500" fill="#999"/>
<path d="M1039.500 258l3 3.500a3 3 0 1 1-6 0z" fill="#5a9de0" stroke="#3670b4" stroke-width=".5"/>
<rect x="1079" y="258.500" width="14" height="9" fill="#e8e8e8" stroke="#999" stroke-width=".6"/><path d="M1082 266l4-4 4 4z" fill="none" stroke="#444" stroke-width=".7"/>
<path d="M1097 268l7-7v7z" fill="#ddd"/>

<!-- color panel -->
<rect x="945" y="270" width="161" height="2" fill="#999"/>
<path d="M1092 276h4M1099 274l4 4M1103 274l-4 4" stroke="#888" stroke-width=".8"/>
<rect x="946" y="289" width="159" height="1" fill="#bbb"/>
<path d="M948 289v-8a2 2 0 0 1 2-2h33l2 10z" fill="#f5f5f5" stroke="#aaa" stroke-width=".6"/>
<path d="M987 289l-1-10h43l2 10z" fill="#dcdcdc" stroke="#aaa" stroke-width=".6"/>
<path d="M1034 289l-1-10h36l2 10z" fill="#dcdcdc" stroke="#aaa" stroke-width=".6"/>
<text class="t" x="953" y="286">カラー ×</text>
<text class="t" x="991" y="286">スウォッチ</text>
<text class="t" x="1037" y="286">スタイル</text>
<path d="M1094 286h2M1098 284h5M1098 286h5M1098 288h5" stroke="#666" stroke-width=".7"/>
<rect x="959" y="306" width="12" height="12" fill="#fff" stroke="#aaa" stroke-width=".7"/>
<rect x="951" y="298" width="12" height="12" fill="#000" stroke="#888" stroke-width="1"/>
<text class="l" x="977" y="304">R</text><text class="l" x="977" y="322">G</text><text class="l" x="977" y="340">B</text>
<rect x="987" y="300.500" width="75" height="3" fill="url(#sr)"/><rect x="987" y="318.500" width="75" height="3" fill="url(#sg)"/><rect x="987" y="336.500" width="75" height="3" fill="url(#sb)"/>
<path d="M986.500 304l2.800 3v2h-5.600v-2zM986.500 322l2.800 3v2h-5.600v-2zM986.500 340l2.800 3v2h-5.600v-2z" fill="#aaa" stroke="#777" stroke-width=".5"/>
<rect x="1065.500" y="295" width="27" height="14" fill="#fff" stroke="#aaa" stroke-width=".7"/><rect x="1065.500" y="313" width="27" height="14" fill="#fff" stroke="#aaa" stroke-width=".7"/><rect x="1065.500" y="331" width="27" height="14" fill="#fff" stroke="#aaa" stroke-width=".7"/>
<text class="l" x="1068" y="304.500">1</text><text class="l" x="1068" y="322.500">1</text><text class="l" x="1068" y="340.500">1</text>
<rect x="960" y="352" width="131" height="9.500" fill="url(#hue)"/>
<rect x="960" y="352" width="131" height="9.500" fill="url(#dark)"/>
<rect x="1086" y="352" width="5" height="5" fill="#fff"/><rect x="1086" y="357" width="5" height="5" fill="#000"/>

<!-- layers panel -->
<rect x="945" y="366" width="161" height="2" fill="#888"/>
<path d="M1092 372h4M1099 370l4 4M1103 370l-4 4" stroke="#888" stroke-width=".8"/>
<rect x="946" y="384" width="159" height="1" fill="#bbb"/>
<path d="M948 384v-8a2 2 0 0 1 2-2h37l2 10z" fill="#f5f5f5" stroke="#aaa" stroke-width=".6"/>
<path d="M994 384l-1-10h43l2 10z" fill="#dcdcdc" stroke="#aaa" stroke-width=".6"/>
<path d="M1040 384l-1-10h22l2 10z" fill="#dcdcdc" stroke="#aaa" stroke-width=".6"/>
<text class="t" x="953" y="382">レイヤー ×</text>
<text class="t" x="998" y="382">チャンネル</text>
<text class="t" x="1044" y="382">パス</text>
<path d="M1094 382h2M1098 380h5M1098 382h5M1098 384h5" stroke="#666" stroke-width=".7"/>
<rect x="948" y="388" width="85" height="11" rx="2" fill="#e6e6e6" stroke="#c4c4c4" stroke-width=".7"/>
<text x="952" y="396.500" font-size="7.500" style="fill:#999">通常</text>
<path d="M1025 392l2-2 2 2zM1025 395l2 2 2-2z" fill="#555"/>
<text x="1037" y="396.500" font-size="7" style="fill:#999">不透明度：</text>
<rect x="1072" y="388" width="24" height="11" fill="#f5f5f5" stroke="#ccc" stroke-width=".7"/>
<text x="1074" y="396.500" font-size="7.500" style="fill:#ccc">44%</text>
<rect x="1098" y="388" width="6" height="11" fill="#e8e8e8" stroke="#ccc" stroke-width=".6"/><path d="M1099.500 391l3 2.500-3 2.500z" fill="#222"/>
<rect x="946" y="402" width="159" height=".8" fill="#ccc"/>
<text x="950" y="413.500" font-size="7.500" style="fill:#777">ロック：</text>
<g fill="#e4e4e4" stroke="#bbb" stroke-width=".6"><rect x="975" y="405" width="9" height="11"/><rect x="986" y="405" width="9" height="11"/><rect x="997" y="405" width="9" height="11"/><rect x="1008" y="405" width="9" height="11"/></g>
<rect x="976.500" y="407" width="6" height="7" fill="url(#chk)" stroke="#777" stroke-width=".5"/>
<path d="M988 414l5-6" stroke="#777" stroke-width="1"/>
<path d="M998 410.500h7M1001.500 407v7" stroke="#666" stroke-width=".8"/>
<rect x="1010" y="410" width="5" height="4" fill="#666"/><path d="M1011 410v-2h3v2" fill="none" stroke="#666" stroke-width=".7"/>
<text x="1055" y="413.500" font-size="7.500" style="fill:#999">塗り：</text>
<rect x="1072" y="405" width="24" height="11" fill="#f5f5f5" stroke="#ccc" stroke-width=".7"/>
<text x="1073" y="413.500" font-size="7.500" style="fill:#ccc">100%</text>
<rect x="1098" y="405" width="6" height="11" fill="#e8e8e8" stroke="#ccc" stroke-width=".6"/><path d="M1099.500 408l3 2.500-3 2.500z" fill="#222"/>
<rect x="946" y="417" width="150" height=".8" fill="#aaa"/>

<!-- layer rows -->
<rect x="962" y="621" width="134" height="25" fill="#c3deff"/>
<g fill="#aaa">
<rect x="946" y="440" width="150" height="1"/><rect x="946" y="465.700" width="150" height="1"/><rect x="946" y="491.500" width="150" height="1"/><rect x="946" y="517.200" width="150" height="1"/><rect x="946" y="543" width="150" height="1"/><rect x="946" y="568.700" width="150" height="1"/><rect x="946" y="594.500" width="150" height="1"/><rect x="946" y="620.200" width="150" height="1"/><rect x="946" y="646" width="150" height="1"/><rect x="946" y="671.700" width="150" height="1"/>
<rect x="961.500" y="417" width=".8" height="255"/>
</g>
<g fill="#f7f7f7" stroke="#d0d0d0" stroke-width=".7">
<rect x="948" y="422" width="11" height="11"/><rect x="948" y="448" width="11" height="11"/><rect x="948" y="474" width="11" height="11"/><rect x="948" y="500" width="11" height="11"/><rect x="948" y="525" width="11" height="11"/><rect x="948" y="551" width="11" height="11"/><rect x="948" y="577" width="11" height="11"/><rect x="948" y="602" width="11" height="11"/><rect x="948" y="628" width="11" height="11"/><rect x="948" y="654" width="11" height="11"/>
</g>
<g fill="#222"><path d="M949.500 427.500q4-3.500 8 0-4 3.500-8 0zM949.500 453.500q4-3.500 8 0-4 3.500-8 0zM949.500 530.500q4-3.500 8 0-4 3.500-8 0zM949.500 556.500q4-3.500 8 0-4 3.500-8 0zM949.500 582.500q4-3.500 8 0-4 3.500-8 0zM949.500 607.500q4-3.500 8 0-4 3.500-8 0zM949.500 659.500q4-3.500 8 0-4 3.500-8 0z"/></g>
<g fill="url(#chk)" stroke="#777" stroke-width=".8">
<rect x="964" y="418" width="20" height="20"/><rect x="964" y="444" width="20" height="20"/><rect x="964" y="469" width="20" height="20"/><rect x="964" y="495" width="20" height="20"/><rect x="964" y="521" width="20" height="20"/><rect x="964" y="546" width="20" height="20"/><rect x="964" y="572" width="20" height="20"/><rect x="964" y="598" width="20" height="20"/>
</g>
<rect x="964" y="623" width="20" height="20" fill="#fff" stroke="#666" stroke-width="1.200"/>
<rect x="964" y="649" width="20" height="20" fill="#fff" stroke="#777" stroke-width=".8"/>
<circle cx="974" cy="479" r="3" fill="none" stroke="#888" stroke-width=".7"/>
<circle cx="974" cy="581" r="3" fill="none" stroke="#222" stroke-width="1"/>
<path d="M974 604v4l-3 4M974 608l3 4M970 607h8" fill="none" stroke="#f0c8a4" stroke-width="1.500"/>
<circle cx="974" cy="631" r="3" fill="none" stroke="#ccc" stroke-width=".7"/><path d="M970 640c0-4 8-4 8 0" fill="none" stroke="#ccc" stroke-width=".7"/>
<rect x="987" y="629" width="4" height="9" rx="1.500" fill="#ddd" stroke="#555" stroke-width=".8"/>
<rect x="994" y="623" width="21" height="21" fill="#000"/>
<circle cx="1003" cy="633" r="4" fill="#fff"/>
<path d="M996 625l17 17M1013 625l-17 17" stroke="#d01818" stroke-width="1.300"/>
<text class="l" x="989" y="430">レイヤー 7</text><text class="l" x="989" y="456">主線</text><text class="l" x="989" y="482">陰</text><text class="l" x="989" y="508">レイヤー 6</text><text class="l" x="989" y="533">瞳</text><text class="l" x="989" y="559">目</text><text class="l" x="989" y="585">髪</text><text class="l" x="989" y="610">肌</text><text class="l" x="1020" y="636">背景 のコピー</text><text class="l" x="989" y="662">レイヤー 1</text>
<!-- layers scrollbar -->
<rect x="1096" y="418" width="9" height="254" fill="#f0f0f0" stroke="#ccc" stroke-width=".6"/>
<path d="M1097 428a3.500 4 0 0 1 7 0" fill="#fafafa" stroke="#bbb" stroke-width=".6"/>
<rect x="1096.500" y="445" width="8" height="186" rx="3.500" fill="url(#blue)" stroke="#1b5fc4" stroke-width=".7"/>
<path d="M1098 659l2.500-3 2.500 3zM1098 665l2.500 3 2.500-3z" fill="#333"/>
<!-- layers bottom bar -->
<rect x="946" y="672" width="159" height="15" fill="#e9e9e9"/>
<path d="M971 674v11M993 674v11M1007 674v11M1027 674v11M1044 674v11M1060 674v11M1077 674v11M1093 674v11" stroke="#cfcfcf" stroke-width=".7"/>
<rect x="974" y="677" width="6" height="4" rx="2" fill="none" stroke="#777" stroke-width=".7"/><rect x="980" y="677" width="6" height="4" rx="2" fill="none" stroke="#777" stroke-width=".7"/>
<text x="994" y="683" font-size="9" style="fill:#222;font-family:'Liberation Serif',serif;font-style:italic;font-weight:bold">fx</text>
<rect x="1011" y="675" width="10" height="9" fill="#bbb" stroke="#555" stroke-width=".7"/><circle cx="1016" cy="679.500" r="2.500" fill="#fff"/>
<circle cx="1033" cy="679.500" r="4" fill="#fff" stroke="#222" stroke-width=".8"/><path d="M1036 676.500a4 4 0 0 1-6 6z" fill="#222"/>
<path d="M1047 677h3l1 1h5v6h-9z" fill="#eee" stroke="#666" stroke-width=".7"/>
<rect x="1064" y="676" width="8" height="8" fill="#eee" stroke="#555" stroke-width=".7"/><path d="M1068 680h4v4" fill="none" stroke="#222" stroke-width="1"/>
<path d="M1082 677h7l-1 8h-5zM1081 676.500h9" fill="#ddd" stroke="#444" stroke-width=".8"/>
<path d="M1096 686l8-8v8z" fill="#ddd"/>
<rect x="945" y="687" width="161" height="1" fill="#777"/>
<rect x="946" y="688" width="163" height="5" fill="#d8d8d8"/>
<rect x="946" y="689" width="6" height="4" fill="#3a8a4a"/>
<text x="964" y="693.500" font-size="6" style="fill:#666">This  Google 検索</text>
</svg>
</body></html>
